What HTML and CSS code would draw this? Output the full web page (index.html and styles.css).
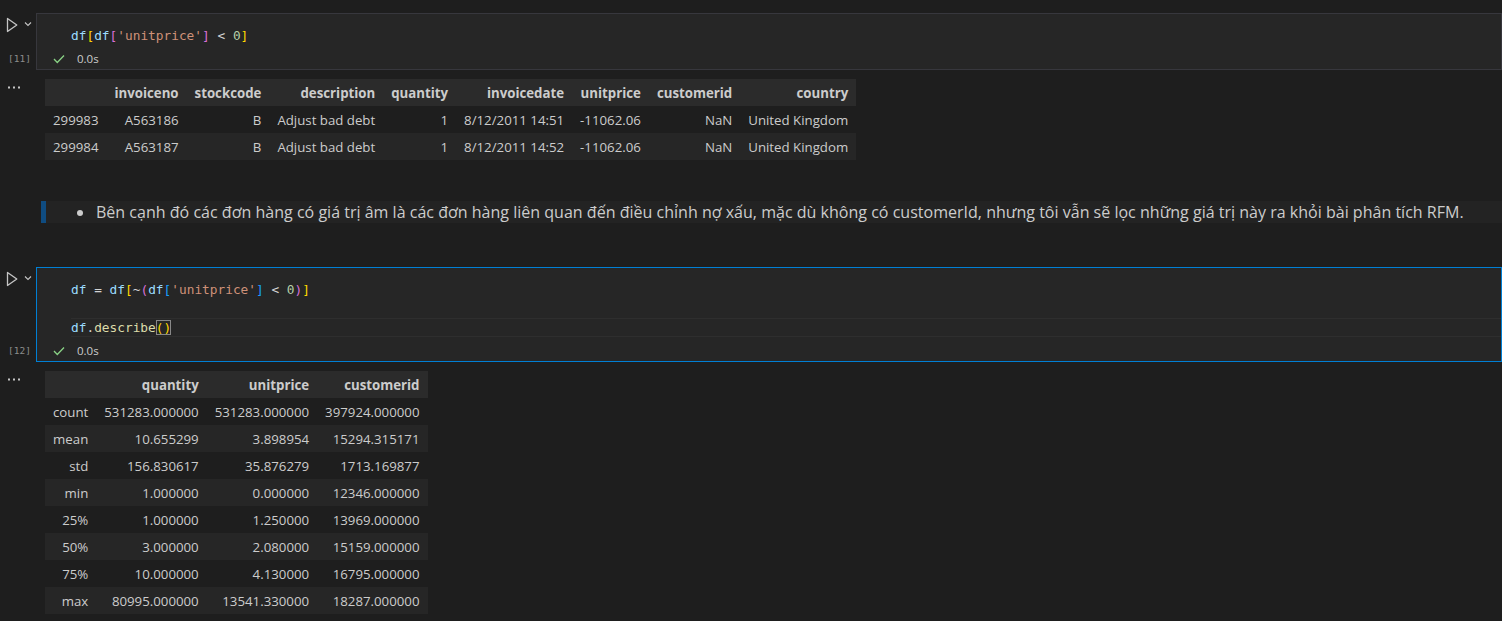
FILE: index.html
```html
<!DOCTYPE html>
<html lang="vi">
<head>
<meta charset="utf-8">
<title>Notebook</title>
<link rel="stylesheet" href="styles.css">
</head>
<body>
<div class="notebook">

  <section class="code-cell">
    <div class="gutter">
      <div class="run">
        <svg class="run-icon" width="12" height="16" viewBox="0 0 12 16"><polygon points="1.5,1.5 10.8,8 1.5,14.5" fill="none" stroke="#c5c5c5" stroke-width="1.3" stroke-linejoin="round"/></svg>
        <svg class="chev" width="8" height="6" viewBox="0 0 8 6"><polyline points="1,1.5 4,4.5 7,1.5" fill="none" stroke="#c5c5c5" stroke-width="1.1"/></svg>
      </div>
      <div class="exec-count">[11]</div>
    </div>
    <div class="editor">
      <div class="code">
        <div class="line"><span class="v">df</span><span class="b1">[</span><span class="v">df</span><span class="b2">[</span><span class="s">'unitprice'</span><span class="b2">]</span> &lt; <span class="n">0</span><span class="b1">]</span></div>
      </div>
      <div class="status">
        <svg class="check" width="12" height="10" viewBox="0 0 12 10"><polyline points="1,5 4.3,8.5 11,1.5" fill="none" stroke="#89d185" stroke-width="1.3"/></svg>
        <span class="time">0.0s</span>
      </div>
    </div>
  </section>

  <section class="output">
    <div class="out-gutter">
      <svg class="dots" width="14" height="3" viewBox="0 0 14 3"><rect x="0" y="0.5" width="2" height="2" fill="#c5c5c5"/><rect x="5" y="0.5" width="2" height="2" fill="#c5c5c5"/><rect x="10" y="0.5" width="2" height="2" fill="#c5c5c5"/></svg>
    </div>
    <div class="out-body">
      <table class="df">
        <thead>
          <tr><th></th><th>invoiceno</th><th>stockcode</th><th>description</th><th>quantity</th><th>invoicedate</th><th>unitprice</th><th>customerid</th><th>country</th></tr>
        </thead>
        <tbody>
          <tr><th>299983</th><td>A563186</td><td>B</td><td>Adjust bad debt</td><td>1</td><td>8/12/2011 14:51</td><td>-11062.06</td><td>NaN</td><td>United Kingdom</td></tr>
          <tr><th>299984</th><td>A563187</td><td>B</td><td>Adjust bad debt</td><td>1</td><td>8/12/2011 14:52</td><td>-11062.06</td><td>NaN</td><td>United Kingdom</td></tr>
        </tbody>
      </table>
    </div>
  </section>

  <section class="md-cell">
    <div class="md-bar"></div>
    <div class="md-body">
      <ul class="md-list">
        <li>Bên cạnh đó các đơn hàng có giá trị âm là các đơn hàng liên quan đến điều chỉnh nợ xấu, mặc dù không có customerId, nhưng tôi vẫn sẽ lọc những giá trị này ra khỏi bài phân tích RFM.</li>
      </ul>
    </div>
  </section>

  <section class="code-cell">
    <div class="gutter">
      <div class="run">
        <svg class="run-icon" width="12" height="16" viewBox="0 0 12 16"><polygon points="1.5,1.5 10.8,8 1.5,14.5" fill="none" stroke="#c5c5c5" stroke-width="1.3" stroke-linejoin="round"/></svg>
        <svg class="chev" width="8" height="6" viewBox="0 0 8 6"><polyline points="1,1.5 4,4.5 7,1.5" fill="none" stroke="#c5c5c5" stroke-width="1.1"/></svg>
      </div>
      <div class="exec-count">[12]</div>
    </div>
    <div class="editor focused">
      <div class="code">
        <div class="line"><span class="v">df</span> = <span class="v">df</span><span class="b1">[</span>~<span class="b2">(</span><span class="v">df</span><span class="b3">[</span><span class="s">'unitprice'</span><span class="b3">]</span> &lt; <span class="n">0</span><span class="b2">)</span><span class="b1">]</span></div>
        <div class="line"></div>
        <div class="line current"><span class="v">df</span>.<span class="f">describe</span><span class="b1 match">()</span></div>
      </div>
      <div class="status">
        <svg class="check" width="12" height="10" viewBox="0 0 12 10"><polyline points="1,5 4.3,8.5 11,1.5" fill="none" stroke="#89d185" stroke-width="1.3"/></svg>
        <span class="time">0.0s</span>
      </div>
    </div>
  </section>

  <section class="output">
    <div class="out-gutter">
      <svg class="dots" width="14" height="3" viewBox="0 0 14 3"><rect x="0" y="0.5" width="2" height="2" fill="#c5c5c5"/><rect x="5" y="0.5" width="2" height="2" fill="#c5c5c5"/><rect x="10" y="0.5" width="2" height="2" fill="#c5c5c5"/></svg>
    </div>
    <div class="out-body">
      <table class="df">
        <thead>
          <tr><th></th><th>quantity</th><th>unitprice</th><th>customerid</th></tr>
        </thead>
        <tbody>
          <tr><th>count</th><td>531283.000000</td><td>531283.000000</td><td>397924.000000</td></tr>
          <tr><th>mean</th><td>10.655299</td><td>3.898954</td><td>15294.315171</td></tr>
          <tr><th>std</th><td>156.830617</td><td>35.876279</td><td>1713.169877</td></tr>
          <tr><th>min</th><td>1.000000</td><td>0.000000</td><td>12346.000000</td></tr>
          <tr><th>25%</th><td>1.000000</td><td>1.250000</td><td>13969.000000</td></tr>
          <tr><th>50%</th><td>3.000000</td><td>2.080000</td><td>15159.000000</td></tr>
          <tr><th>75%</th><td>10.000000</td><td>4.130000</td><td>16795.000000</td></tr>
          <tr><th>max</th><td>80995.000000</td><td>13541.330000</td><td>18287.000000</td></tr>
        </tbody>
      </table>
    </div>
  </section>

</div>
</body>
</html>
```

FILE: styles.css
```css
html, body {
  margin: 0;
  padding: 0;
  background: #1e1e1e;
  overflow: hidden;
}

body {
  font-family: "Open Sans", "Noto Sans", sans-serif;
  color: #cccccc;
}

.notebook {
  padding-top: 13px;
}

/* ---------- code cells ---------- */
.code-cell {
  display: grid;
  grid-template-columns: 36px 1fr;
}

.gutter {
  display: flex;
  flex-direction: column;
  justify-content: space-between;
}

.run {
  display: flex;
  align-items: flex-start;
  padding: 4px 0 0 6px;
}

.run-icon {
  display: block;
}

.chev {
  display: block;
  margin: 4px 0 0 6px;
}

.exec-count {
  font-family: "DejaVu Sans Mono", monospace;
  font-size: 9.5px;
  color: #8c8c8c;
  height: 21px;
  line-height: 21px;
  margin-bottom: 1px;
  padding-left: 8px;
}

.editor {
  border: 1px solid #37373d;
  background: #262626;
}

.editor.focused {
  border-color: #007fd4;
}

.code {
  padding: 12px 0 3px 34px;
  font-family: "DejaVu Sans Mono", monospace;
  font-size: 12.8px;
  line-height: 19px;
  color: #d4d4d4;
}

.line {
  height: 19px;
  white-space: pre;
}

.line.current {
  box-shadow: inset 0 1px #2e2e2e, inset 0 -1px #2e2e2e;
}

.v { color: #9cdcfe; }
.s { color: #ce9178; }
.n { color: #b5cea8; }
.f { color: #dcdcaa; }
.b1 { color: #ffd700; }
.b2 { color: #da70d6; }
.b3 { color: #179fff; }

.match {
  outline: 1px solid #888888;
  outline-offset: -1px;
}

.status {
  display: flex;
  align-items: center;
  height: 21px;
  padding-left: 16px;
}

.check {
  display: block;
}

.time {
  font-size: 11.5px;
  margin-left: 12px;
  color: #cccccc;
}

/* ---------- outputs ---------- */
.output {
  display: grid;
  grid-template-columns: 36px 1fr;
  padding-top: 9px;
}

.out-gutter {
  padding-left: 8px;
}

.dots {
  display: block;
  margin-top: 7px;
}

.out-body {
  padding-left: 9px;
}

.df {
  border-collapse: collapse;
  font-size: 13.25px;
  color: #cccccc;
}

.df th,
.df td {
  height: 27px;
  padding: 0 8px;
  text-align: right;
  white-space: nowrap;
  font-weight: normal;
}

.df thead th {
  font-weight: bold;
}

.df thead tr {
  background: #2b2b2b;
}

.df tbody tr:nth-child(even) {
  background: #262626;
}

/* ---------- markdown cell ---------- */
.md-cell {
  display: flex;
  margin: 41px 0 44px 41px;
}

.md-bar {
  width: 5px;
  background: #0f4c81;
}

.md-body {
  flex: 1;
  background: #232323;
}

.md-list {
  margin: 0;
  padding-left: 50px;
  list-style: none;
  font-size: 16.05px;
  line-height: 22px;
  color: #cccccc;
  white-space: nowrap;
}

.md-list li::before {
  content: "";
  display: inline-block;
  width: 6px;
  height: 6px;
  border-radius: 50%;
  background: #cccccc;
  margin-left: -19px;
  margin-right: 13px;
  vertical-align: 2px;
}
```
